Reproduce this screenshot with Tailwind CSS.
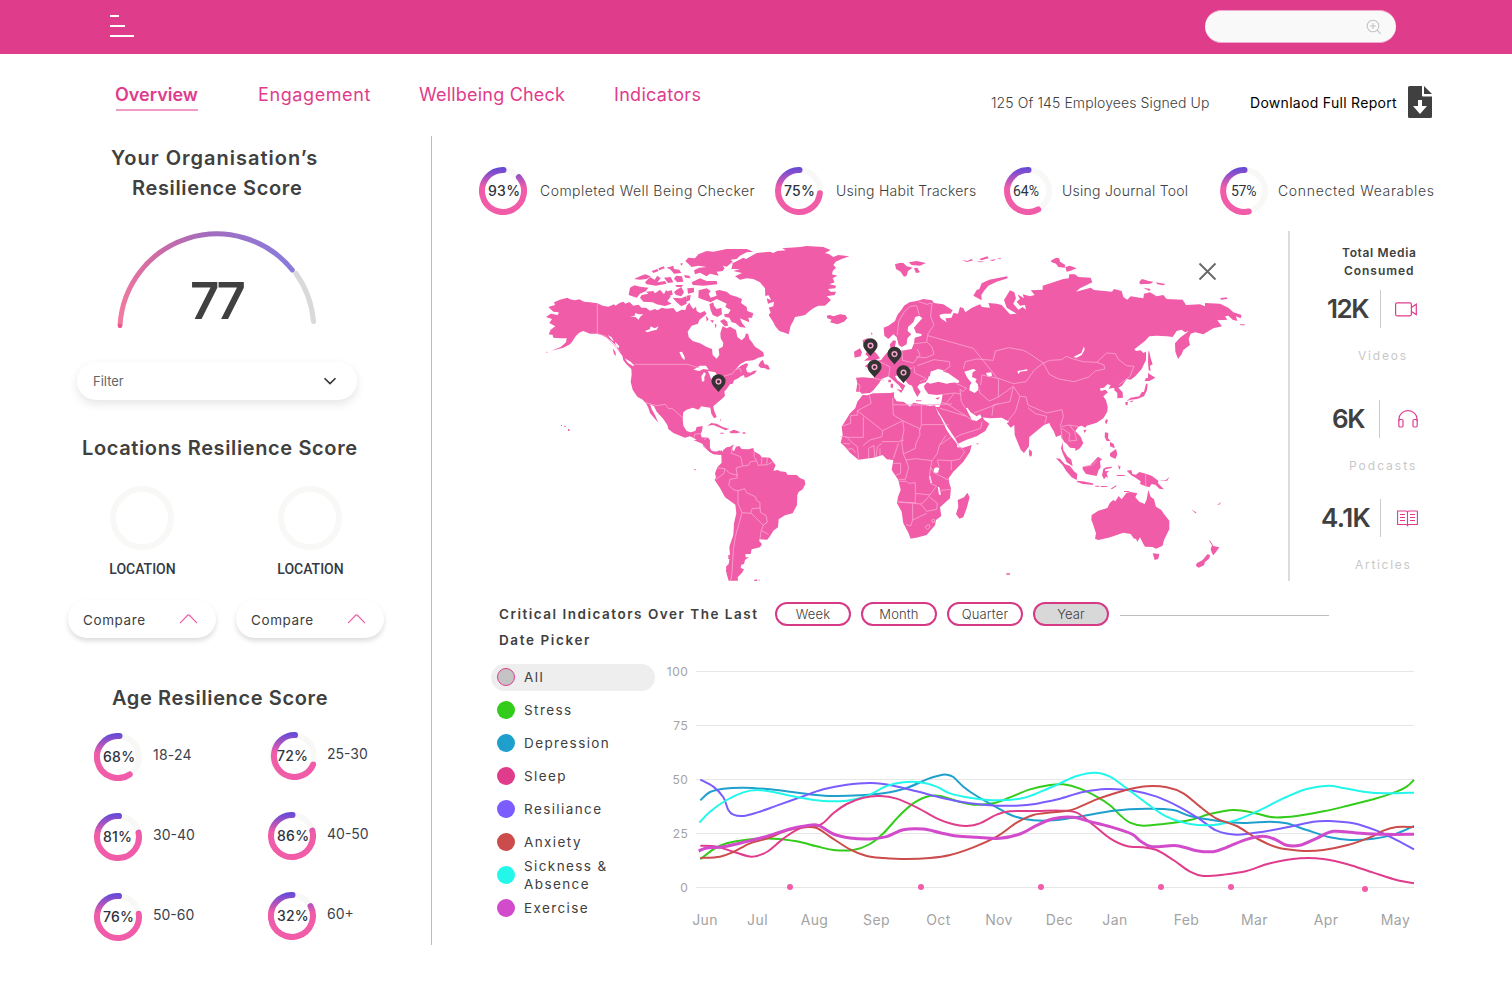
<!DOCTYPE html>
<html lang="en">
<head>
<meta charset="utf-8">
<title>Resilience Dashboard</title>
<script src="https://cdn.jsdelivr.net/npm/@tailwindcss/browser@4"></script>
</head>
<body class="w-[1512px] h-[982px] overflow-hidden bg-white font-['Inter',sans-serif] text-[#404040]">

<header class="h-[54px] bg-[#e03c8c] flex items-start justify-between pl-[110px] pr-[116px]">
  <div class="flex flex-col gap-[8px] pt-[15px]">
    <span class="block h-[2px] w-[9px] bg-white"></span>
    <span class="block h-[2px] w-[15px] bg-white"></span>
    <span class="block h-[2px] w-[24px] bg-white"></span>
  </div>
  <div class="mt-[10px] h-[33px] w-[191px] rounded-full bg-[#f9f9f9] border-y border-[#f0a8cc] flex items-center justify-end pr-[14px]">
    <svg class="w-[16px] h-[16px]" viewBox="0 0 16 16" fill="none" stroke="#c4c4c4" stroke-width="1.1"><circle cx="7" cy="7" r="5.8"/><path d="M7 4v6M4 7h6M11.2 11.2L14.6 14.8"/></svg>
  </div>
</header>

<nav class="h-[82px] flex items-start text-[#e03c8c] text-[18px] leading-[28px] whitespace-nowrap">
  <div class="pl-[115px] w-[258px] pt-[27px]"><span class="font-semibold">Overview</span><div class="ml-px h-[2px] w-[82px] bg-[#f09cc6]"></div></div>
  <div class="w-[161px] pt-[27px] tracking-[0.6px]">Engagement</div>
  <div class="w-[195px] pt-[27px] tracking-[0.2px]">Wellbeing Check</div>
  <div class="w-[377px] pt-[27px] tracking-[0.3px]">Indicators</div>
  <div class="w-[259px] pt-[35px] text-[14px] font-light text-[#404040] tracking-[0.1px]">125 Of 145 Employees Signed Up</div>
  <div class="w-[158px] pt-[35px] text-[14px] text-black tracking-[0.3px]">Downlaod Full Report</div>
  <svg class="mt-[32px] w-[24px] h-[32px]" viewBox="0 0 24 32"><path fill="#404040" d="M1.500 0H14v9.500q0 1 1 1h9V30.500q0 1.500-1.500 1.500h-21Q0 32 0 30.500V1.500Q0 0 1.500 0ZM16 0l8 8h-8Z"/><path fill="#fff" d="M10 14h4v6h5l-7 8-7-8h5Z"/></svg>
</nav>

<main class="flex">
  <section class="w-[432px] h-[809px] border-r border-[#bcbcbc] pt-[7px] flex flex-col">
    <h2 class="text-[20px] font-semibold leading-[30px] whitespace-nowrap"><span class="block pl-[111px] tracking-[1px]">Your Organisation’s</span><span class="block pl-[132px] tracking-[0.65px]">Resilience Score</span></h2>
    <div class="mt-[25px] h-[104px] relative">
      <svg class="w-[431px] h-[104px]" viewBox="0 228 431 104" fill="none" stroke-width="5" stroke-linecap="round">
        <defs><linearGradient id="gauge" gradientUnits="userSpaceOnUse" x1="120" y1="320" x2="292" y2="262"><stop offset="0" stop-color="#f27ba0"/><stop offset=".3" stop-color="#cf6aa4"/><stop offset=".6" stop-color="#a36cbc"/><stop offset="1" stop-color="#8a7bdc"/></linearGradient></defs>
        <path stroke="#d9d9d9" d="M296 273.500A97 97 0 0 1 313.500 321.500"/>
        <path stroke="url(#gauge)" d="M120 325.500A97 97 0 0 1 292.300 270"/>
        <path stroke="#e8558f" stroke-width="4" d="M120 325.500v.4"/>
      </svg>
      <div class="absolute left-[190px] top-[43px] text-[51px] font-semibold leading-[60px] tracking-[-4px] text-[#404040]">77</div>
    </div>
    <div class="mt-[30px] ml-[77px] w-[280px] h-[38px] rounded-full bg-white shadow-[0_4px_10px_rgba(0,0,0,0.1)] flex items-center justify-between pl-[16px] pr-[20px] text-[13px] text-[#666]">
      <span class="pt-[2px]">Filter</span>
      <svg class="w-[14px] h-[8px]" viewBox="0 0 14 8" fill="none" stroke="#333" stroke-width="1.600"><path d="M1.500 1.200L7 6.600L12.500 1.200"/></svg>
    </div>
    <h2 class="mt-[33px] pl-[82px] text-[20px] font-semibold leading-[30px] tracking-[0.62px] whitespace-nowrap">Locations Resilience Score</h2>
    <div class="mt-[23px] pl-[68px] flex gap-[20px]">
      <div class="w-[148px] flex flex-col items-center">
        <div class="size-[64px] rounded-full border-[6px] border-[#f8f8f6]"></div>
        <div class="mt-[9px] pl-px leading-[20px] text-[14px] font-medium text-[#333a45] font-['Roboto',sans-serif]">LOCATION</div>
        <div class="mt-[21px] w-[148px] h-[38px] rounded-full shadow-[0_3px_5px_rgba(0,0,0,0.14)] flex items-center justify-between pl-[15px] pr-[18px] text-[13.500px]"><span class="pt-[2px] tracking-[0.6px]">Compare</span><svg class="w-[19px] h-[10px]" viewBox="0 0 19 10" fill="none" stroke="#ef5ca8" stroke-width="1.200"><path d="M1 9.200L8.600 1.300Q9.500.5 10.400 1.300L18 9.200"/></svg></div>
      </div>
      <div class="w-[148px] flex flex-col items-center">
        <div class="size-[64px] rounded-full border-[6px] border-[#f8f8f6]"></div>
        <div class="mt-[9px] pl-px leading-[20px] text-[14px] font-medium text-[#333a45] font-['Roboto',sans-serif]">LOCATION</div>
        <div class="mt-[21px] w-[148px] h-[38px] rounded-full shadow-[0_3px_5px_rgba(0,0,0,0.14)] flex items-center justify-between pl-[15px] pr-[18px] text-[13.500px]"><span class="pt-[2px] tracking-[0.6px]">Compare</span><svg class="w-[19px] h-[10px]" viewBox="0 0 19 10" fill="none" stroke="#ef5ca8" stroke-width="1.200"><path d="M1 9.200L8.600 1.300Q9.500.5 10.400 1.300L18 9.200"/></svg></div>
      </div>
    </div>
    <h2 class="mt-[45px] pl-[112px] text-[20px] font-semibold leading-[30px] tracking-[0.62px] whitespace-nowrap">Age Resilience Score</h2>
    <div class="flex pl-[94px] text-[14px] text-[#3c424d] whitespace-nowrap">
      <div class="w-[174px] pt-[20px] flex flex-col gap-[32px]">
        <div class="flex items-center gap-[11px] h-[48px]"><div class="relative size-[48px]"><svg class="size-[48px]" viewBox="0 0 48 48" fill="none" stroke-width="6" stroke-linecap="round"><defs><linearGradient id="ring" gradientUnits="userSpaceOnUse" x1="0" y1="2" x2="0" y2="46"><stop offset="0" stop-color="#6a4bd6"/><stop offset=".42" stop-color="#f15ca8"/><stop offset="1" stop-color="#f15ca8"/></linearGradient></defs><circle cx="24" cy="24" r="21" stroke="#f8f8f6"/><path stroke="url(#ring)" d="M25.500 3.050A21 21 0 1 0 35.700 41.400"/></svg><span class="absolute left-[9px] top-[14px] leading-[20px] font-medium tracking-[0.3px] text-[#2d3440]">68%</span></div><span class="pb-[5px] tracking-[0.2px]">18-24</span></div>
        <div class="flex items-center gap-[11px] h-[48px]"><div class="relative size-[48px]"><svg class="size-[48px]" viewBox="0 0 48 48" fill="none" stroke-width="6" stroke-linecap="round"><circle cx="24" cy="24" r="21" stroke="#f8f8f6"/><path stroke="url(#ring)" d="M25 3.020A21 21 0 1 0 44.500 19.600"/></svg><span class="absolute left-[9px] top-[14px] leading-[20px] font-medium tracking-[0.2px] text-[#2d3440]">81%</span></div><span class="pb-[5px]">30-40</span></div>
        <div class="flex items-center gap-[11px] h-[48px]"><div class="relative size-[48px]"><svg class="size-[48px]" viewBox="0 0 48 48" fill="none" stroke-width="6" stroke-linecap="round"><circle cx="24" cy="24" r="21" stroke="#f8f8f6"/><path stroke="url(#ring)" d="M25 3.020A21 21 0 1 0 44.700 20.700"/></svg><span class="absolute left-[9px] top-[14px] leading-[20px] font-medium tracking-[0.2px] text-[#2d3440]">76%</span></div><span class="pb-[5px]">50-60</span></div>
      </div>
      <div class="pt-[19px] flex flex-col gap-[32px]">
        <div class="flex items-center gap-[11px] h-[48px]"><div class="relative size-[48px]"><svg class="size-[48px]" viewBox="0 0 48 48" fill="none" stroke-width="6" stroke-linecap="round"><circle cx="25" cy="24" r="21" stroke="#f8f8f6"/><path stroke="url(#ring)" d="M27 3.050A20.500 21 0 1 0 45.200 32.500"/></svg><span class="absolute left-[9px] top-[14px] leading-[20px] font-medium tracking-[0.2px] text-[#2d3440]">72%</span></div><span class="pb-[5px]">25-30</span></div>
        <div class="flex items-center gap-[11px] h-[48px]"><div class="relative size-[48px]"><svg class="size-[48px]" viewBox="0 0 48 48" fill="none" stroke-width="6" stroke-linecap="round"><circle cx="24" cy="24" r="21" stroke="#f8f8f6"/><path stroke="url(#ring)" d="M24.500 3A21 21 0 1 0 44.300 18.600"/></svg><span class="absolute left-[9px] top-[14px] leading-[20px] font-medium tracking-[0.3px] text-[#2d3440]">86%</span></div><span class="pb-[5px]">40-50</span></div>
        <div class="flex items-center gap-[11px] h-[48px]"><div class="relative size-[48px]"><svg class="size-[48px]" viewBox="0 0 48 48" fill="none" stroke-width="6" stroke-linecap="round"><circle cx="24" cy="24" r="21" stroke="#f8f8f6"/><path stroke="url(#ring)" d="M24.500 3A21 21 0 1 0 42.500 14.200"/></svg><span class="absolute left-[9px] top-[14px] leading-[20px] font-medium tracking-[0.2px] text-[#2d3440]">32%</span></div><span class="pb-[5px]">60+</span></div>
      </div>
    </div>
  </section>

  <section class="w-[1080px] flex flex-col">
    <div class="pt-[31px] pl-[47px] h-[95px] flex items-start text-[14px] font-light whitespace-nowrap">
      <div class="w-[296px] flex items-center gap-[13px]"><div class="relative size-[48px]"><svg class="size-[48px]" viewBox="0 0 48 48" fill="none" stroke-width="6" stroke-linecap="round"><circle cx="24" cy="24" r="21" stroke="#f8f8f6"/><path stroke="url(#ring)" d="M24.500 3A21 21 0 1 0 39.850 10.200"/></svg><span class="absolute left-[9px] top-[14px] leading-[20px] font-medium tracking-[0.3px] text-[#2d3440]">93%</span></div><span class="pb-px tracking-[0.46px]">Completed Well Being Checker</span></div>
      <div class="w-[229px] flex items-center gap-[13px]"><div class="relative size-[48px]"><svg class="size-[48px]" viewBox="0 0 48 48" fill="none" stroke-width="6" stroke-linecap="round"><circle cx="24" cy="24" r="21" stroke="#f8f8f6"/><path stroke="url(#ring)" d="M24.500 3A21 21 0 1 0 44.900 26.200"/></svg><span class="absolute left-[9px] top-[14px] leading-[20px] font-medium tracking-[0.2px] text-[#2d3440]">75%</span></div><span class="pb-px tracking-[0.25px]">Using Habit Trackers</span></div>
      <div class="w-[216px] flex items-center gap-[10px]"><div class="relative size-[48px]"><svg class="size-[48px]" viewBox="0 0 48 48" fill="none" stroke-width="6" stroke-linecap="round"><circle cx="24" cy="24" r="21" stroke="#f8f8f6"/><path stroke="url(#ring)" d="M24.500 3A21 21 0 1 0 34.200 42.400"/></svg><span class="absolute left-[9px] top-[14px] leading-[20px] font-normal font-['Roboto',sans-serif] text-[#2d3440]">64%</span></div><span class="pb-px tracking-[0.25px]">Using Journal Tool</span></div>
      <div class="flex items-center gap-[10px]"><div class="relative size-[48px]"><svg class="size-[48px]" viewBox="0 0 48 48" fill="none" stroke-width="6" stroke-linecap="round"><circle cx="24" cy="24" r="21" stroke="#f8f8f6"/><path stroke="url(#ring)" d="M24.500 3A21 21 0 1 0 28.700 44.500"/></svg><span class="absolute left-[11px] top-[14px] leading-[20px] font-normal tracking-[-0.3px] font-['Roboto',sans-serif] text-[#2d3440]">57%</span></div><span class="pb-px tracking-[0.67px]">Connected Wearables</span></div>
    </div>

    <div class="flex h-[350px]">
      <svg class="ml-[108px] w-[710px] h-[350px]" viewBox="540 231 710 350" fill="#f15ca8">
        <!-- North America and Greenland -->
        <g transform="translate(540 235) scale(.33333)">
          <path d="M82,188 L90,193 L105,196 L118,193 L132,200 L150,202 L172,205 L188,212 L205,215 L222,208 L226,212 L240,203 L250,200 L256,206 L268,201 L280,212 L296,209 L304,218 L318,218 L330,227 L345,222 L352,226 L366,218 L378,221 L400,219 L410,232 L425,224 L436,225 L440,212 L448,203 L453,213 L460,222 L468,215 L470,228 L480,234 L494,228 L500,236 L490,245 L478,255 L474,266 L455,272 L443,290 L446,306 L458,318 L480,325 L500,336 L516,342 L518,360 L530,371 L538,360 L536,342 L548,335 L550,324 L542,310 L541,295 L545,282 L548,274 L560,280 L570,275 L588,285 L592,306 L605,316 L615,306 L618,295 L625,298 L628,312 L635,320 L645,335 L656,342 L670,352 L672,364 L655,368 L640,376 L618,378 L600,388 L586,404 L603,392 L618,385 L625,388 L618,402 L622,412 L640,414 L652,405 L645,415 L622,427 L614,428 L612,420 L603,424 L595,430 L582,436 L578,446 L570,448 L560,462 L553,470 L555,482 L548,490 L530,505 L520,514 L522,525 L530,546 L522,550 L514,536 L511,518 L495,516 L484,514 L475,524 L458,518 L440,524 L430,532 L428,550 L430,572 L440,588 L452,592 L466,588 L470,576 L488,573 L486,588 L482,597 L485,607 L505,608 L510,616 L508,634 L515,648 L535,650 L545,646 L552,658 L540,660 L520,658 L505,648 L490,634 L488,626 L475,618 L462,610 L450,604 L435,608 L400,594 L385,582 L382,570 L370,552 L350,530 L342,514 L330,508 L336,524 L345,540 L355,563 L345,552 L330,534 L325,518 L318,505 L308,494 L292,485 L278,464 L272,440 L275,420 L274,402 L258,386 L250,376 L247,362 L236,348 L230,332 L215,318 L200,308 L185,300 L172,296 L150,296 L130,288 L120,292 L108,302 L98,318 L90,328 L70,338 L34,347 L62,336 L78,322 L80,310 L60,310 L40,308 L38,300 L26,298 L32,284 L46,274 L28,264 L36,252 L18,246 L32,236 L54,240 L56,232 L40,230 L25,216 L45,210 L42,202 L60,194 Z"/>
          <path d="M580,80 L575,86 L610,68 L618,72 L650,54 L690,50 L700,54 L712,48 L738,46 L726,40 L780,36 L800,33 L850,36 L872,45 L855,54 L868,58 L880,66 L895,60 L928,64 L905,72 L887,80 L880,90 L888,98 L878,108 L876,118 L892,122 L878,130 L884,142 L868,148 L888,152 L886,160 L864,162 L872,170 L888,170 L884,180 L860,184 L873,195 L855,212 L835,212 L820,220 L806,230 L795,240 L782,243 L765,246 L760,258 L752,272 L746,298 L730,292 L718,288 L706,274 L700,262 L686,240 L692,232 L686,218 L700,214 L702,200 L684,206 L680,190 L694,196 L685,180 L676,184 L675,160 L660,142 L640,132 L620,130 L600,134 L585,124 L606,114 L580,108 L600,102 L574,102 Z"/>
          <path d="M436,78 L445,68 L465,70 L475,58 L500,48 L520,50 L560,42 L620,42 L640,50 L620,52 L600,62 L590,72 L572,74 L578,80 L560,95 L548,92 L554,100 L548,108 L530,110 L536,122 L510,116 L500,124 L480,113 L465,118 L462,106 L478,98 L500,96 L475,92 L455,96 Z"/>
          <path d="M432,120 L448,122 L452,130 L436,128Z M455,142 L480,130 L500,138 L530,138 L532,148 L490,152 L458,150 Z M420,86 L428,84 L426,92Z M380,98 L400,92 L402,102 L418,104 L424,114 L402,116 L392,104Z M355,100 L372,94 L374,100 L358,106Z M408,122 L426,124 L430,140 L412,142 L402,132Z M282,132 L300,124 L315,118 L332,124 L320,132 L300,134Z M315,142 L330,126 L344,134 L352,122 L362,130 L352,142 L375,138 L380,146 L348,152 L320,148Z M372,128 L392,126 L400,142 L384,144Z M335,108 L352,102 L356,108 L340,114Z M406,150 L430,150 L424,156 L410,156Z"/>
          <path d="M476,166 L500,160 L512,168 L506,176 L512,188 L530,182 L526,168 L538,165 L560,170 L572,180 L590,185 L606,192 L603,204 L620,216 L622,228 L640,235 L636,248 L625,248 L628,262 L610,254 L600,250 L606,264 L618,278 L600,276 L586,264 L575,262 L568,248 L555,246 L552,238 L565,236 L572,225 L556,216 L560,206 L548,200 L530,192 L512,202 L490,194 L475,188 Z M540,258 l12,-6 l10,8 l2,12 l-10,2Z M508,208 l12,-6 l2,10 l8,10 l14,-4 l2,20 l-14,8 l-14,-6 l-6,-14Z M498,242 l8,10 l-6,8Z M510,256 l12,0 l-4,8Z M524,266 l6,4 l-4,10Z"/>
          <path d="M266,180 L270,158 L284,151 L300,155 L325,158 L318,168 L300,176 L290,188 Z M300,188 L305,180 L325,176 L318,170 L340,168 L345,175 L360,164 L372,178 L378,165 L386,172 L392,185 L382,198 L395,206 L375,213 L350,208 L338,202 L310,200 Z M384,168 L396,166 L398,180 L388,182Z M408,166 L424,156 L432,172 L424,184 L408,180 L402,172Z M398,188 L424,190 L438,184 L440,206 L424,214 L410,202Z M442,160 L462,158 L462,172 L444,176Z M440,182 L452,180 L450,196 L438,200Z"/>
          <path d="M655,392 L660,382 L668,374 L674,388 L684,390 L690,402 L684,404 L675,400 L662,398 Z M632,412 l14,-6 l2,4 l-10,6Z"/>
          <path d="M502,572 L514,564 L530,566 L548,576 L568,582 L556,586 L540,578 L520,570 Z M568,590 L582,584 L602,592 L590,595 L572,595Z M608,592h8v4h-8Z M541,593h10v3h-10Z M540,550l4,8l-3,-1Z M84,581l6,3l-2,5l-4,-2Z M63,570h3v3h-3Z M73,573h4v3h-4Z M19,350h3v3h-3Z"/>
          <path d="M205,302 L222,312 L234,330 L228,332 L215,318 L206,312Z M218,340l8,10l2,12l-6,-4Z M252,372 L268,380 L284,398 L276,400 L260,388Z"/>
          <path fill="#fff" d="M270,244 L284,242 L286,234 L296,238 L310,238 L300,246 L296,254 L286,246Z M315,288 L330,282 L332,274 L344,280 L356,274 L350,284 L334,288 L322,292Z M418,352 L426,350 L434,366 L434,376 L426,368Z M460,404 L480,392 L498,392 L506,404 L490,402 L478,408Z M486,440 L484,424 L492,412 L498,416 L493,426 L493,438Z M504,408 L526,412 L532,422 L520,424 L514,434 L508,418Z M203,300L214,306L222,318L216,316Z M225,320L238,334L236,340L226,328Z M254,370L272,380L282,390L280,394L264,384Z"/>
          <g fill="none" stroke="#f9a5d0" stroke-width="2.500"><path d="M172,205V296L186,300L198,304L214,322L240,350M284,388H444L460,394L478,398M550,424L578,416L586,404L600,400L604,412M318,503L350,512L376,508L386,522L396,520L410,532L426,546M462,610L464,598L482,595M484,622L500,608M508,640L490,632"/></g>
        </g>
        <!-- South America -->
        <g transform="translate(680 440) scale(.33333)">
          <path d="M40,0 L88,0 L90,18 L88,26 L98,36 L108,36 L118,31 L126,38 L130,30 L140,22 L150,20 L162,13 L155,28 L162,34 L168,20 L178,18 L185,27 L205,28 L220,24 L222,34 L240,44 L245,52 L270,53 L278,64 L287,76 L280,92 L294,90 L300,94 L318,96 L322,104 L350,105 L360,114 L374,120 L376,133 L368,148 L356,156 L352,165 L351,195 L338,220 L315,226 L296,238 L294,262 L280,272 L272,286 L262,299 L238,298 L238,304 L246,312 L240,322 L215,328 L212,342 L196,342 L197,352 L206,352 L195,360 L192,372 L184,374 L182,384 L192,388 L186,398 L173,412 L174,422 L146,422 L140,402 L138,380 L146,372 L150,345 L148,320 L160,285 L162,250 L169,220 L166,194 L135,172 L120,144 L104,120 L108,112 L105,100 L112,82 L125,68 L124,44 L116,38 L106,42 L92,38 L80,26 L70,12 L60,8Z M43,87h4v4h-4Z M222,420l8,-2l2,5h-8Z M234,419l5,0l0,4Z M145,345h5v12h-5Z M138,388h5v8h-5Z"/>
          <g fill="none" stroke="#f9a5d0" stroke-width="2.500"><path d="M158,20L154,40L182,50L188,78L168,84L172,106L150,100L134,86L112,84M134,86L132,100L108,118M170,104L172,114L150,118L146,136L162,150L174,152L194,146L200,158L226,170L230,182L240,188V206M188,78L206,76L210,66L230,62L222,50L222,36M230,62L234,76L262,74L278,66M246,52L244,74M262,54L260,74M174,152V190L186,218L166,290L160,330L156,400L152,422M186,218L212,220L216,206L240,204L242,218L258,226L262,246L250,256L212,218M262,246L250,256L244,270L240,296M246,272L266,284"/></g>
        </g>
        <!-- Europe and Asia -->
        <g transform="translate(780 235) scale(.33333)">
          <path d="M228,428 L250,427 L282,430 L285,415 L276,404 L254,394 L262,388 L282,388 L292,378 L304,374 L310,366 L322,352 L332,348 L330,328 L340,316 L348,318 L345,335 L342,345 L365,347 L395,342 L402,325 L404,308 L425,302 L424,297 L450,292 L430,298 L408,294 L402,278 L414,264 L427,250 L418,242 L406,246 L400,262 L384,276 L383,288 L394,298 L382,310 L380,328 L365,336 L356,330 L350,306 L340,298 L325,312 L313,302 L311,278 L325,272 L345,258 L352,240 L366,222 L372,212 L388,202 L410,198 L430,192 L456,196 L462,204 L490,208 L518,226 L512,236 L490,236 L478,240 L482,250 L500,262 L496,250 L515,248 L520,234 L534,236 L540,216 L550,220 L556,232 L576,218 L600,208 L606,216 L630,218 L625,204 L650,206 L665,210 L690,238 L710,236 L680,218 L672,195 L690,166 L703,172 L708,190 L700,206 L715,224 L728,216 L738,224 L735,210 L720,212 L710,200 L720,192 L712,178 L732,190 L728,178 L750,184 L764,180 L752,166 L788,164 L788,152 L820,142 L850,132 L866,130 L868,118 L885,118 L895,126 L932,128 L937,142 L900,160 L888,170 L932,158 L942,165 L996,170 L1002,162 L1025,168 L1030,186 L1042,194 L1052,184 L1090,190 L1092,176 L1110,172 L1130,184 L1150,180 L1160,192 L1208,194 L1218,210 L1260,208 L1275,214 L1275,204 L1320,206 L1345,218 L1360,232 L1385,240 L1382,250 L1368,244 L1372,258 L1358,254 L1345,242 L1335,244 L1342,254 L1312,256 L1326,274 L1300,280 L1270,298 L1245,292 L1232,296 L1226,312 L1230,330 L1210,345 L1205,358 L1194,372 L1186,350 L1185,325 L1200,308 L1222,292 L1240,276 L1236,285 L1215,292 L1205,284 L1190,288 L1178,306 L1160,304 L1130,302 L1108,304 L1095,318 L1063,343 L1068,348 L1082,346 L1090,354 L1098,350 L1098,375 L1085,402 L1066,424 L1052,434 L1040,432 L1026,452 L1015,458 L1028,472 L1029,488 L1012,490 L1012,474 L1003,466 L1003,458 L986,461 L992,450 L982,448 L972,458 L960,460 L962,468 L976,464 L984,472 L970,484 L978,496 L983,515 L982,530 L970,550 L950,563 L920,572 L916,578 L905,572 L895,575 L886,588 L902,605 L910,625 L900,640 L886,648 L886,640 L870,638 L860,626 L852,620 L846,608 L850,645 L862,664 L874,674 L878,694 L860,682 L848,655 L843,640 L848,620 L842,600 L828,606 L822,590 L812,574 L808,564 L792,570 L780,580 L748,606 L747,634 L732,654 L722,644 L704,600 L703,570 L692,578 L680,564 L688,560 L665,548 L630,550 L605,547 L600,538 L590,544 L572,532 L562,518 L558,520 L568,540 L576,555 L590,558 L604,548 L606,542 L612,554 L628,566 L616,588 L590,604 L560,614 L534,626 L525,610 L500,572 L486,548 L466,516 L478,516 L484,502 L488,478 L470,480 L445,477 L434,462 L432,452 L442,442 L480,438 L510,442 L535,444 L538,438 L505,415 L480,406 L470,415 L445,425 L448,438 L418,448 L412,456 L422,470 L412,486 L402,468 L396,452 L385,448 L372,432 L355,420 L345,424 L352,436 L376,452 L372,460 L368,468 L358,452 L338,434 L325,424 L305,432 L296,446 L280,466 L270,474 L245,476 L240,470 L228,470 L232,445Z"/>
          <path d="M140,242 L150,240 L160,244 L180,238 L196,240 L202,250 L192,260 L172,268 L150,262 L155,254 L142,250Z M345,88 L358,84 L370,84 L380,94 L398,98 L384,108 L380,122 L372,125 L362,110 L348,102Z M386,82 L410,78 L438,84 L420,92 L395,90Z M402,100 L412,98 L420,112 L408,114Z M682,124 L650,130 L628,134 L605,145 L598,162 L590,165 L580,182 L605,196 L604,180 L612,168 L625,152 L650,140 L683,130Z M545,74 L562,78 L574,72 L580,76 L560,81Z M598,72 L622,64 L626,70 L604,76Z M628,76 L648,72 L640,78Z M650,71 L662,69 L662,73Z M590,78 L615,80 L600,82Z"/>
          <path d="M248,316 L262,310 L278,322 L276,342 L290,356 L300,370 L285,376 L252,377 L266,366 L256,358 L262,348 L250,336 Z M222,350 L240,340 L246,352 L242,364 L224,368Z M325,434h8v8h-8Z M332,446h7v12h-7Z M350,462 L368,466 L364,474Z M332,326h8v8h-8Z M408,496h16v3h-16Z M466,490l14,-4l-6,8Z M296,452l6,-2Z M274,290l4,8l-4,2Z"/>
          <path d="M815,76 L828,68 L838,70 L840,80 L856,90 L854,98 L835,96 L828,86 L812,80Z M856,96 L870,92 L890,100 L870,108 L860,110Z M1078,140 L1086,132 L1106,138 L1120,140 L1112,146 L1080,148Z M1128,142 L1156,147 L1150,151 L1132,148Z M1090,158 L1112,162 L1108,168Z M1320,190 L1340,187 L1342,192 L1324,194Z M1378,268h16v3h-12Z M1105,348 L1108,350 L1112,370 L1118,388 L1110,392 L1112,408 L1106,406 L1104,380Z M1094,438 L1098,428 L1104,430 L1104,414 L1126,428 L1108,438Z M1098,446 L1103,446 L1101,466 L1092,484 L1072,492 L1052,494 L1040,498 L1052,488 L1078,484 L1085,472 L1092,470Z M1036,502 L1044,500 L1042,512 L1036,508Z M1048,500l12,-4l-4,6Z M978,552 L984,556 L979,568 L975,562Z M910,586 L920,584 L914,594Z M975,592 L985,594 L984,610 L992,618 L980,618 L974,606Z M990,620 L1002,628 L1004,640 L990,634Z M960,648l10,-12l-2,4Z M990,655 L1008,642 L1012,658 L1006,672 L990,664Z M748,642 L756,650 L755,664 L747,660Z"/>
          <path fill="#fff" d="M438,440 L450,422 L452,410 L474,402 L490,406 L490,414 L505,420 L522,434 L520,442 L500,446 L475,440 L450,446Z M553,410 L580,402 L588,406 L578,412 L576,426 L590,432 L586,440 L594,448 L594,466 L584,474 L568,466 L570,450 L575,444 L562,428Z M618,414 L634,412 L636,422 L624,426Z M712,408 L742,403 L742,407 L720,410 L716,418Z M880,366 L904,354 L912,334 L914,344 L905,360 L890,368Z"/>
          <g fill="none" stroke="#f9a5d0" stroke-width="2.500"><path d="M352,300L356,260L372,232L390,214L410,212L418,240M416,200L440,208L456,204L452,244L462,270L444,296L440,320L456,336L462,358L438,368L408,366M444,302L580,340L654,432M550,402L556,380L590,372L640,376L646,348L686,338L730,346L742,352L790,384M402,326L440,322M366,344L368,376L400,384L420,360L412,342M412,392L462,374L508,380L510,394L490,410M402,394L404,414L438,430M292,376L330,396L326,424M232,446L240,450L238,470M282,430L312,436M396,400L372,398M420,440L440,432M530,446L560,460L548,470L540,462M790,384L810,376L845,374L858,364L880,372L910,380L950,382L972,390L974,402L946,408L926,426L882,440L836,432L808,418L790,384M950,382L980,354L1006,356L1016,374L1040,392L1062,394L1050,424L1016,450M790,384L764,404L752,420L738,440L700,446L656,430L655,486L628,498L600,474L594,452M655,506L582,534M602,450L606,420L654,430M655,486L700,454L720,484L738,486L744,510L800,534L846,524L850,545L842,570L846,608M700,454L690,500L640,510L636,542M744,518L766,536L800,544L795,565M720,484L706,530L684,558M846,575L866,570L895,575M846,580L870,596L866,620M868,570L884,590L890,616L868,618M540,462L544,500L556,520M490,478L524,474L544,478M480,520L560,544M500,502L524,474M524,610L540,600L602,580L606,560M484,502L500,506L560,544L576,556"/></g>
        </g>
        <!-- Africa -->
        <g transform="translate(830 380) scale(.33333)">
          <path d="M98,45 L112,46 L130,40 L180,39 L192,37 L192,52 L200,64 L222,66 L240,80 L250,68 L275,73 L300,78 L315,76 L322,92 L334,116 L350,150 L362,168 L380,190 L382,202 L400,203 L425,195 L420,215 L400,245 L370,275 L356,295 L358,310 L363,325 L360,355 L330,382 L334,408 L318,420 L315,436 L290,465 L265,472 L242,476 L235,458 L220,430 L215,395 L201,370 L204,350 L212,330 L205,300 L185,270 L190,240 L170,238 L158,225 L130,233 L85,239 L60,218 L45,200 L32,188 L38,165 L35,140 L60,100 L76,84 L82,65 Z M412,338 L419,352 L410,385 L400,412 L388,416 L378,402 L385,380 L383,360 L402,352Z M440,190h5v3h-5Z M528,580h12v4h-10Z M596,212 L605,222 L600,232Z"/>
          <path fill="#fff" d="M312,266 L318,262 L328,264 L324,278 L311,278Z M297,288 L301,288 L306,308 L301,310Z M323,320 L328,322 L333,344 L327,344Z M318,82L330,108L326,104Z"/>
          <g fill="none" stroke="#f9a5d0" stroke-width="2.500"><path d="M118,46L124,70L82,92L158,152L218,122L190,105L188,54M82,92V106H62V130L38,138M100,110V172H46M158,152L156,170L120,180L100,196M218,122L268,145L270,165L258,190L256,205L220,222L215,185L222,150L218,122M274,74V134H356M156,185H205L222,180M205,190L190,236M274,134L270,150M348,166L328,196L322,220L306,242L258,236L228,240L220,222M328,196L362,172M380,190L404,216L388,238L364,242L322,240L328,262M364,242V270M366,72L274,75M274,75L188,74M190,250H212V280L196,286M228,240L236,262L226,298L206,298M208,304H230L236,310L256,308V340L300,345L320,318L304,312L298,288L302,262L306,242M205,366L256,368V340M205,366L272,372L284,364L300,345M302,262L312,278L355,300M272,372L290,394L320,388L322,370L300,352M248,372V420L242,438L228,434M248,420L290,400M326,332L362,328M290,436l8,-2l2,8l-8,6l-6,-6ZM305,420l8,-2l1,8l-7,2ZM32,170L50,170L64,186L82,200L86,236M116,234V205L132,196L134,232M138,232L142,200L156,190M150,228V205M40,190L60,192M50,208L68,206L76,218"/></g>
        </g>
        <!-- Australia and Oceania -->
        <g transform="translate(1030 400) scale(.33333)">
          <path d="M185,345 L205,332 L232,324 L240,308 L250,300 L256,304 L266,288 L275,298 L284,286 L290,278 L302,276 L322,280 L316,292 L328,305 L344,312 L350,298 L355,270 L362,290 L372,298 L378,320 L394,330 L402,342 L418,362 L418,388 L402,420 L398,437 L378,446 L368,441 L345,440 L338,428 L330,412 L322,426 L318,416 L312,416 L302,402 L280,398 L245,410 L232,414 L205,420 L195,416 L198,400 L188,370 L184,360 Z M368,460 L388,462 L385,476 L374,480Z M536,420 L542,424 L550,438 L568,442 L558,456 L550,466 L546,460 L542,448 L546,436Z M532,463 L541,465 L537,476 L525,486 L522,496 L506,503 L498,498 L500,490 L518,480Z M484,328 L500,338 L496,340Z M562,314l12,-8l-6,8Z"/>
          <path d="M290,212 L304,210 L307,222 L318,224 L328,216 L350,222 L366,228 L385,242 L384,250 L402,268 L388,266 L376,254 L365,252 L358,262 L345,258 L330,252 L332,244 L314,232 L304,226Z M385,242 L408,240 L418,230 L412,242Z M158,200 L180,196 L204,170 L216,178 L210,184 L212,202 L206,210 L200,228 L168,222 L158,208Z M78,175 L90,176 L104,192 L120,198 L132,214 L142,222 L140,240 L125,232 L108,212 L98,196Z M140,242 L158,244 L188,250 L190,255 L158,252 L142,246Z M196,257h12v3h-12Z M212,258h20v3h-20Z M242,266l16,-10l2,2l-14,10Z M220,206 L228,202 L246,200 L245,204 L226,208 L226,214 L238,212 L230,220 L234,234 L228,230 L222,238 L216,226Z M264,196l8,4l-4,10Z M260,225h24v3h-24Z M88,200l5,4M282,273h16v3h-16Z"/>
          <path fill="none" stroke="#f9a5d0" stroke-width="2.500" d="M347,222V260M160,200L186,196L200,182"/>
        </g>
        <g>
          <g id="pin" transform="translate(718.500 382)"><path fill="#333" d="M0 10C-3.500 5.500-7 3.200-7-.8A7 7 0 0 1 7-.8C7 3.200 3.500 5.500 0 10Z"/><circle cy="-.4" r="2.300" fill="#333" stroke="#f7a3cd" stroke-width="1.500"/></g>
          <use href="#pin" x="152" y="-36"/><use href="#pin" x="176" y="-27.500"/><use href="#pin" x="156" y="-14.500"/><use href="#pin" x="185" y="-9"/>
        </g>
        <path d="M1199.500 263.500L1215.500 279.500M1215.500 263.500L1199.500 279.500" stroke="#666" stroke-width="1.800"/>
      </svg>

      <aside class="ml-[38px] w-[150px] border-l-2 border-[#dcdcdc] pt-[13px] whitespace-nowrap">
        <div class="pl-[52px] text-[12px] font-semibold leading-[18px] tracking-[0.65px]">Total Media<div class="pl-[2px] tracking-[0.95px]">Consumed</div></div>
        <div class="mt-[10px] flex items-center h-[38px] pl-[37px]">
          <div class="w-[53px] pb-[2px] text-[26px] font-semibold tracking-[-1.5px]">12K</div><span class="w-px h-[38px] bg-[#ccc]"></span>
          <svg class="ml-[14px] w-[22px] h-[15px]" viewBox="0 0 22 15" fill="none" stroke="#e03c8c" stroke-width="1.200"><rect x=".6" y=".8" width="15.800" height="13" rx="1.500"/><path d="M16.400 5.600L21.300 2.200V12.600L16.400 9.400"/></svg>
        </div>
        <div class="mt-[19px] pl-[68px] text-[12px] leading-[18px] tracking-[1.8px] text-[#c8c8c8]">Videos</div>
        <div class="mt-[35px] flex items-center h-[38px] pl-[42px]">
          <div class="w-[47px] pb-[2px] text-[26px] font-semibold tracking-[-1.5px]">6K</div><span class="w-px h-[38px] bg-[#ccc]"></span>
          <svg class="ml-[18px] w-[20px] h-[18px]" viewBox="0 0 20 18" fill="none" stroke="#e03c8c" stroke-width="1.200"><path d="M1 11V9A9 8.300 0 0 1 19 9V11"/><rect x=".8" y="9.500" width="4.200" height="7.500" rx="1.200"/><rect x="15" y="9.500" width="4.200" height="7.500" rx="1.200"/></svg>
        </div>
        <div class="mt-[19px] pl-[59px] text-[12px] leading-[18px] tracking-[2px] text-[#c8c8c8]">Podcasts</div>
        <div class="mt-[24px] flex items-center h-[38px] pl-[31px]">
          <div class="w-[59px] pb-[2px] text-[26px] font-semibold tracking-[-0.6px]">4.1K</div><span class="w-px h-[38px] bg-[#ccc]"></span>
          <svg class="ml-[16px] w-[21px] h-[17px]" viewBox="0 0 21 17" fill="none" stroke="#e03c8c" stroke-width="1.100"><path d="M.6 1H9Q10.500 1 10.500 2.500V16.300Q10.500 14.500 9 14.500H.6ZM20.400 1H12Q10.500 1 10.500 2.500M20.400 1V14.500H12Q10.500 14.500 10.500 16.300M3 4.500H8M3 7.500H8M3 10.500H8M13 4.500H18M13 7.500H18M13 10.500H18"/></svg>
        </div>
        <div class="mt-[19px] pl-[65px] text-[12px] leading-[18px] tracking-[1.700px] text-[#c8c8c8]">Articles</div>
      </aside>
    </div>

    <div class="pt-[21px] pl-[67px] flex items-start h-[72px] whitespace-nowrap">
      <h3 class="w-[276px] text-[13.500px] font-semibold leading-[26px] -mt-px tracking-[1.510px]">Critical Indicators Over The Last<br><span class="tracking-[1.600px]">Date Picker</span></h3>
      <div class="flex gap-[10px] text-[13px] font-light tracking-[0.15px]">
        <button class="w-[76px] h-[24px] pt-[2px] rounded-full border-2 border-[#d63a86] flex items-center justify-center">Week</button>
        <button class="w-[76px] h-[24px] pt-[2px] rounded-full border-2 border-[#d63a86] flex items-center justify-center">Month</button>
        <button class="w-[76px] h-[24px] pt-[2px] rounded-full border-2 border-[#d63a86] flex items-center justify-center">Quarter</button>
        <button class="w-[76px] h-[24px] pt-[2px] rounded-full border-2 border-[#d63a86] bg-[#d8d8d8] flex items-center justify-center">Year</button>
      </div>
      <div class="ml-[11px] mt-[13px] h-px w-[209px] bg-[#bdbdbd]"></div>
    </div>

    <div class="flex pl-[59px]">
      <ul class="w-[169px] pt-[11px] text-[13.500px] leading-[18px] tracking-[1.400px] whitespace-nowrap">
        <li class="w-[164px] h-[27px] mb-[2px] pb-px rounded-full bg-[#eee] flex items-center gap-[9px] pl-[6px]"><span class="size-[18px] rounded-full bg-[#c4c4c4] border border-[#e03c8c]"></span>All</li>
        <li class="h-[33px] flex items-center gap-[9px] pl-[6px]"><span class="size-[18px] rounded-full bg-[#33cc1a]"></span>Stress</li>
        <li class="h-[33px] flex items-center gap-[9px] pl-[6px]"><span class="size-[18px] rounded-full bg-[#1e9fcc]"></span>Depression</li>
        <li class="h-[33px] flex items-center gap-[9px] pl-[6px]"><span class="size-[18px] rounded-full bg-[#e03c8c]"></span>Sleep</li>
        <li class="h-[33px] flex items-center gap-[9px] pl-[6px]"><span class="size-[18px] rounded-full bg-[#7b5cff]"></span>Resiliance</li>
        <li class="h-[33px] flex items-center gap-[9px] pl-[6px]"><span class="size-[18px] rounded-full bg-[#cc4b4b]"></span>Anxiety</li>
        <li class="h-[33px] flex items-center gap-[9px] pl-[6px]"><span class="size-[18px] rounded-full bg-[#22f7ea]"></span><span>Sickness &amp;<br>Absence</span></li>
        <li class="h-[33px] flex items-center gap-[9px] pl-[6px]"><span class="size-[18px] rounded-full bg-[#d14bcb]"></span>Exercise</li>
      </ul>
      <svg class="w-[765px] h-[280px] mt-[2px]" viewBox="660 655 765 280" font-family="Inter, sans-serif">
        <path d="M696 671.500H1414M696 725.500H1414M696 779.500H1414M696 833.500H1414M696 887.500H1414" stroke="#e6e6e6"/>
        <g font-size="12" fill="#a3a3a3" text-anchor="end" letter-spacing=".6"><text x="688.500" y="676">100</text><text x="688.500" y="730">75</text><text x="688.500" y="784">50</text><text x="688.500" y="838">25</text><text x="688.500" y="892">0</text></g>
        <g font-size="14" fill="#a3a3a3" text-anchor="middle" letter-spacing=".4"><text x="705" y="925">Jun</text><text x="757.500" y="925">Jul</text><text x="814.500" y="925">Aug</text><text x="876.500" y="925">Sep</text><text x="938.500" y="925">Oct</text><text x="999" y="925">Nov</text><text x="1059.500" y="925">Dec</text><text x="1115" y="925">Jan</text><text x="1186.500" y="925">Feb</text><text x="1254.500" y="925">Mar</text><text x="1326" y="925">Apr</text><text x="1395.500" y="925">May</text></g>
        <g id="series" transform="translate(690 760) scale(.33333)" fill="none" stroke-width="6"></g>
        <g fill="#f15ca8"><circle cx="790" cy="887" r="3"/><circle cx="921" cy="887" r="3"/><circle cx="1041" cy="887" r="3"/><circle cx="1161" cy="887" r="3"/><circle cx="1231" cy="887" r="3"/><circle cx="1365" cy="889" r="3"/></g>
      </svg>
    </div>
  </section>
</main>

<script>
const series = [
  ['#33cc1a', 6, '31,298 70,268 110,250 170,239 250,236 320,244 380,259 430,270 490,270 540,252 580,220 630,165 670,130 710,110 750,108 800,123 850,134 910,130 960,112 1020,88 1080,75 1120,73 1170,86 1220,110 1260,136 1290,165 1320,188 1360,197 1420,192 1500,180 1560,162 1630,150 1690,158 1750,172 1820,168 1900,154 1970,138 2050,118 2120,95 2150,80 2172,59'],
  ['#1e9fcc', 6, '31,121 60,96 100,86 160,83 230,87 300,95 370,104 430,108 510,106 580,100 650,84 710,58 745,47 770,44 790,51 820,80 860,108 920,142 970,168 1030,181 1090,181 1180,168 1270,152 1370,146 1450,150 1500,168 1580,182 1660,189 1740,185 1790,190 1850,210 1920,232 1980,240 2050,236 2110,224 2172,198'],
  ['#7b5cff', 6, '31,59 70,80 100,112 115,150 130,164 160,168 200,158 260,137 330,112 400,88 470,74 545,69 610,77 680,94 760,115 840,130 920,137 1000,136 1060,127 1110,116 1180,96 1250,87 1330,92 1400,110 1470,142 1530,178 1580,212 1640,224 1720,215 1800,200 1870,185 1920,183 1990,190 2060,212 2110,235 2172,268'],
  ['#22f7ea', 6, '28,188 60,155 110,120 160,97 200,90 250,96 330,113 400,123 470,122 530,108 590,78 640,67 690,67 740,80 780,100 840,113 920,121 1000,114 1060,92 1110,70 1160,48 1215,38 1260,50 1310,85 1370,130 1430,170 1500,192 1570,195 1640,180 1700,155 1780,115 1850,87 1915,77 1960,84 2020,95 2090,100 2172,98'],
  ['#e03c8c', 6, '31,257 80,260 130,275 185,290 230,276 280,236 330,205 390,195 430,160 470,132 520,113 570,108 620,116 680,142 740,175 790,193 830,198 870,190 920,164 960,154 1040,153 1110,152 1160,158 1210,195 1260,235 1310,258 1360,262 1400,270 1450,300 1500,335 1540,348 1600,344 1670,333 1740,310 1830,295 1900,297 1970,312 2050,338 2120,360 2172,370'],
  ['#cc4b4b', 6, '31,294 90,290 130,276 180,250 230,236 290,212 340,202 380,204 420,230 480,268 530,288 580,294 650,297 720,294 780,285 850,262 920,230 980,188 1030,165 1090,157 1150,148 1220,118 1300,92 1370,79 1430,82 1480,100 1530,140 1580,176 1640,198 1700,235 1760,262 1830,272 1900,270 1970,256 2040,232 2080,212 2120,201 2172,201'],
  ['#d14bcb', 9, '26,273 50,264 100,260 160,247 230,229 300,207 350,197 385,196 430,222 480,234 540,237 590,230 640,209 700,207 750,218 800,228 860,232 930,235 990,222 1040,196 1090,176 1150,172 1200,185 1260,200 1325,222 1350,242 1385,260 1460,257 1520,272 1570,275 1610,262 1670,238 1720,229 1755,238 1790,256 1830,256 1880,235 1930,214 2000,219 2080,223 2172,223']
];
// Catmull-Rom spline through the points of each series
for (const [color, width, raw] of series) {
  const p = raw.split(' ').map(s => s.split(',').map(Number));
  let d = 'M' + p[0];
  for (let i = 0; i < p.length - 1; i++) {
    const a = p[i - 1] || p[i], b = p[i], c = p[i + 1], e = p[i + 2] || c;
    d += `C${b[0] + (c[0] - a[0]) / 6} ${b[1] + (c[1] - a[1]) / 6} ${c[0] - (e[0] - b[0]) / 6} ${c[1] - (e[1] - b[1]) / 6} ${c[0]} ${c[1]}`;
  }
  const path = document.createElementNS('http://www.w3.org/2000/svg', 'path');
  path.setAttribute('d', d); path.setAttribute('stroke', color); path.setAttribute('stroke-width', width);
  document.getElementById('series').appendChild(path);
}
</script>
</body>
</html>
